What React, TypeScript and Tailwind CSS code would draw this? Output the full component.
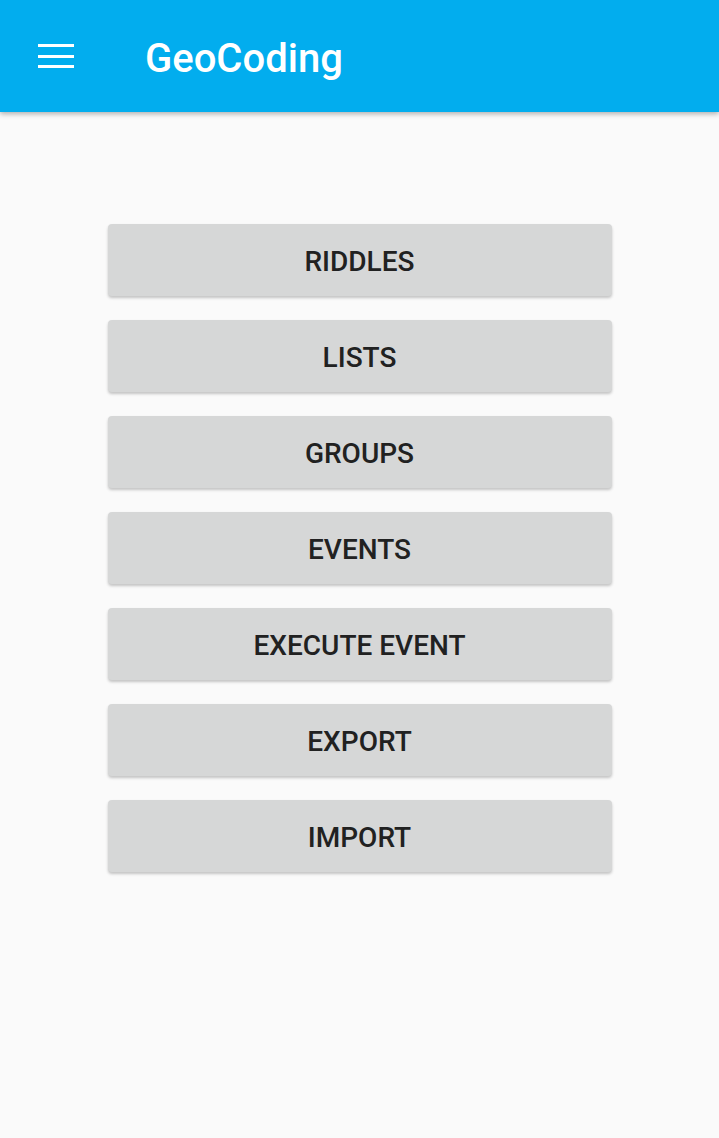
const items = ["RIDDLES", "LISTS", "GROUPS", "EVENTS", "EXECUTE EVENT", "EXPORT", "IMPORT"];

export default function App() {
  return (
    <div className="min-h-[1138px] bg-[#fafafa] font-['Roboto',sans-serif]">
      <header className="relative z-10 flex h-[112px] items-center bg-[#02adee] shadow-[0_2px_5px_rgba(0,0,0,0.3)]">
        <button aria-label="Menu" className="ml-[38px] flex w-[36px] flex-col gap-[7.5px]">
          <span className="block h-[3px] w-full bg-white" />
          <span className="block h-[3px] w-full bg-white" />
          <span className="block h-[3px] w-full bg-white" />
        </button>
        <h1 className="ml-[71px] pt-[6px] text-[40px] font-medium leading-none text-white">GeoCoding</h1>
      </header>

      <main className="flex flex-col items-center gap-[24px] pt-[112px]">
        {items.map((label) => (
          <button
            key={label}
            className="flex h-[72px] w-[504px] items-center justify-center rounded-[4px] bg-[#d6d7d7] pt-[4px] text-[28px] font-medium text-[#212121] shadow-[0_2px_3px_rgba(0,0,0,0.22)]"
          >
            {label}
          </button>
        ))}
      </main>
    </div>
  );
}
